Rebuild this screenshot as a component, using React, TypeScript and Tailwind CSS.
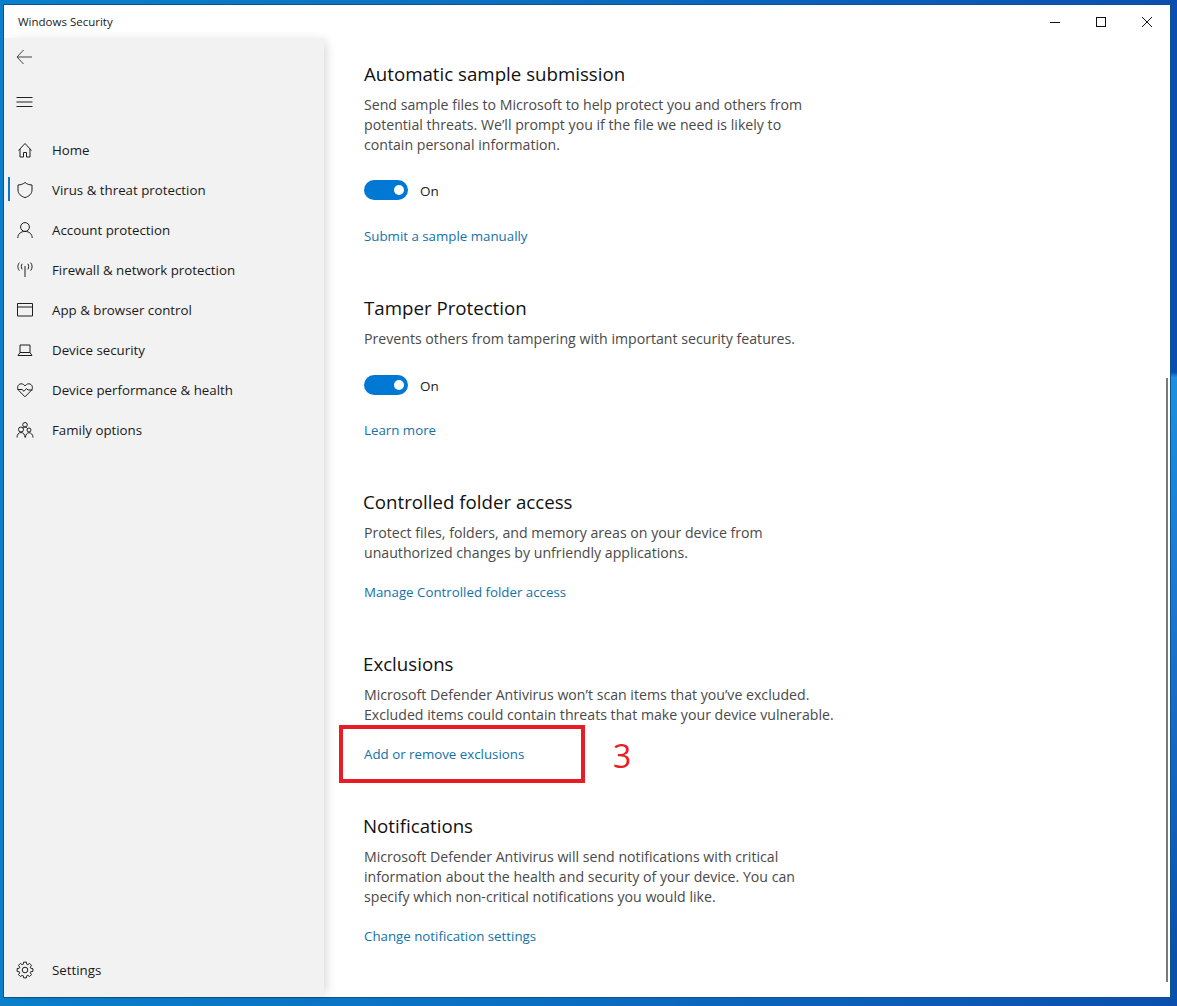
import type { ReactNode } from "react";

const font = { fontFamily: '"Open Sans", "Noto Sans", sans-serif' };

// 8 tooth gear outline for the settings row
function gearPath() {
  const points: string[] = [];
  for (let i = 0; i < 8; i++) {
    const a = (i * Math.PI) / 4;
    for (const [r, d] of [[6, -0.3], [8, -0.17], [8, 0.17], [6, 0.3]]) {
      points.push(`${(9 + r * Math.sin(a + d)).toFixed(2)} ${(9 - r * Math.cos(a + d)).toFixed(2)}`);
    }
  }
  return `M${points.join("L")}Z`;
}

function Icon({ children }: { children: ReactNode }) {
  return (
    <svg width="18" height="18" viewBox="0 0 18 18" fill="none" stroke="#1f1f1f" strokeWidth="1" className="shrink-0">
      {children}
    </svg>
  );
}

const navItems: { label: string; active?: boolean; icon: ReactNode }[] = [
  {
    label: "Home",
    icon: <path d="M2.500 9.500 9 2.500l6.500 7M4 8v8h3.500v-4.500h3V16H14V8" />,
  },
  {
    label: "Virus & threat protection",
    active: true,
    icon: <path d="M9 1.500c2 1.600 4.200 2.400 7 2.500v5c0 3.800-3 6.400-7 7.600C5 15.400 2 12.800 2 9V4c2.800-.1 5-.9 7-2.500Z" />,
  },
  {
    label: "Account protection",
    icon: (
      <>
        <circle cx="9" cy="6" r="4.400" />
        <path d="M1.800 17c0-4 3-6.600 7.200-6.600s7.200 2.600 7.200 6.600" />
      </>
    ),
  },
  {
    label: "Firewall & network protection",
    icon: (
      <>
        <path d="M9 5v11" />
        <path d="M6.200 2.800c-1.200 1.600-1.200 4 0 5.600M11.800 2.800c1.200 1.600 1.200 4 0 5.600M3.400 1.600c-2 2.500-2 5.600 0 8M14.600 1.600c2 2.500 2 5.600 0 8" />
      </>
    ),
  },
  {
    label: "App & browser control",
    icon: <path d="M1.500 2.500h15v12.500h-15zM1.500 6h15" />,
  },
  {
    label: "Device security",
    icon: <path d="M4 4h10v7.500H4zM2 14.500h14M2 14.500l2-3M16 14.500l-2-3" />,
  },
  {
    label: "Device performance & health",
    icon: <path d="M9 15.800 2.600 9.300C.5 7 1.800 2.800 5.200 2.800c1.600 0 2.800.8 3.800 2.200 1-1.400 2.200-2.200 3.800-2.200 3.400 0 4.700 4.200 2.600 6.500L9 15.800ZM1.500 8.500h4.500l2 1.800 2.500-2.800 1.500 1.500h4.500" />,
  },
  {
    label: "Family options",
    icon: (
      <>
        <circle cx="9" cy="3.800" r="2.300" />
        <circle cx="5" cy="8.500" r="2.500" />
        <circle cx="13" cy="9" r="2" />
        <path d="M1 16.500c0-3 1.700-5 4-5s4 2 4 5M9.500 16.500c0-3 1.500-4.800 3.500-4.800s4 1.800 4 4.800M7 7.500c.5-1 1-1.500 2-1.500s2 .6 2.500 1.500" />
      </>
    ),
  },
];

function NavRow({ label, active, icon }: { label: string; active?: boolean; icon: ReactNode }) {
  return (
    <div className="relative flex h-10 items-center pl-3">
      {active && <div className="absolute left-1 top-[7px] h-6 w-0.5 bg-[#0a78c8]" />}
      <Icon>{icon}</Icon>
      <span className="ml-[18px] pt-0.5 text-[13.3px] text-[#1a1a1a]">{label}</span>
    </div>
  );
}

function Heading({ children }: { children: ReactNode }) {
  return <h2 className="h-7 text-[18.7px] leading-7 text-[#111]">{children}</h2>;
}

function Desc({ children }: { children: ReactNode }) {
  return <p className="mt-[7px] text-[14.15px] leading-5 text-[#4a4a4a]">{children}</p>;
}

function Toggle({ className }: { className: string }) {
  return (
    <div className={`flex h-5 items-center ${className}`}>
      <div className="flex h-5 w-11 items-center justify-end rounded-full bg-[#0078d4] pr-[4px]">
        <div className="h-[10px] w-[10px] rounded-full bg-white" />
      </div>
      <span className="ml-3 pt-0.5 text-[13.5px] text-[#1a1a1a]">On</span>
    </div>
  );
}

function Link({ children, className }: { children: ReactNode; className: string }) {
  return <div className={`h-5 text-[13.3px] leading-5 text-[#1272a8] ${className}`}>{children}</div>;
}

export default function App() {
  return (
    <div
      className="h-[1006px] w-[1177px] overflow-hidden pl-1 pt-[5px] [background:linear-gradient(180deg,#0a4fb0_0%,#0a4fb0_37%,#1b90e0_37.5%,#1a78d0_60%,#0b50ad_95%)_right/7px_100%_no-repeat,linear-gradient(90deg,#0a80cc,#0a6cc0_50%,#0b4fae)]"
      style={font}
    >
      <div className="relative flex h-[992px] w-[1166px] flex-col bg-white shadow-[0_0_0_1px_#0d5488]">
        {/* Title bar */}
        <div className="flex h-[33px] shrink-0 items-center justify-between">
          <span className="ml-[14px] text-[11.5px] text-[#222]">Windows Security</span>
          <div className="flex items-center">
            <svg width="12" height="12" viewBox="0 0 12 12" stroke="#111" fill="none" className="mr-[34px]">
              <path d="M1 6.500h10" />
            </svg>
            <svg width="12" height="12" viewBox="0 0 12 12" stroke="#111" fill="none" className="mr-[34px]">
              <rect x="1.500" y="1.500" width="9" height="9" />
            </svg>
            <svg width="12" height="12" viewBox="0 0 12 12" stroke="#111" fill="none" className="mr-[17px]">
              <path d="M1 1l10 10M11 1 1 11" />
            </svg>
          </div>
        </div>

        <div className="flex min-h-0 flex-1">
          {/* Sidebar */}
          <aside className="flex w-80 shrink-0 flex-col bg-[#f2f2f2] shadow-[5px_0_10px_-3px_rgba(0,0,0,0.16)]">
            <div className="flex h-[38px] items-center pl-[11px]">
              <svg width="18" height="18" viewBox="0 0 18 18" stroke="#444" fill="none">
                <path d="M17 9H2M8.500 2 2 9l6.500 7" />
              </svg>
            </div>
            <div className="mt-[6px] flex h-10 items-center pl-[11px]">
              <svg width="18" height="18" viewBox="0 0 18 18" stroke="#222" fill="none">
                <path d="M1.500 4.500h16M1.500 9h16M1.500 13.500h16" />
              </svg>
            </div>
            <nav className="mt-[8px]">
              {navItems.map((item) => (
                <NavRow key={item.label} {...item} />
              ))}
            </nav>
            <div className="mt-auto pb-[7px]">
              <div className="flex h-10 items-center pl-3">
                <Icon>
                  <circle cx="9" cy="9" r="2.800" />
                  <path d={gearPath()} />
                </Icon>
                <span className="ml-[18px] pt-0.5 text-[13.3px] text-[#1a1a1a]">Settings</span>
              </div>
            </div>
          </aside>

          {/* Main content */}
          <main className="flex-1 pl-10 pt-[22px]">
            <Heading>Automatic sample submission</Heading>
            <Desc>
              Send sample files to Microsoft to help protect you and others from
              <br />
              potential threats. We’ll prompt you if the file we need is likely to
              <br />
              contain personal information.
            </Desc>
            <Toggle className="mt-[25px]" />
            <Link className="mt-[26px]">Submit a sample manually</Link>

            <div className="mt-12">
              <Heading>Tamper Protection</Heading>
              <Desc>Prevents others from tampering with important security features.</Desc>
              <Toggle className="mt-[26px]" />
              <Link className="mt-[25px]">Learn more</Link>
            </div>

            <div className="-ml-px mt-12">
              <Heading>Controlled folder access</Heading>
              <div className="ml-px">
                <Desc>
                  Protect files, folders, and memory areas on your device from
                  <br />
                  unauthorized changes by unfriendly applications.
                </Desc>
                <Link className="mt-[19px]">Manage Controlled folder access</Link>
              </div>
            </div>

            <div className="-ml-px mt-12">
              <Heading>Exclusions</Heading>
              <div className="ml-px">
                <Desc>
                  Microsoft Defender Antivirus won’t scan items that you’ve excluded.
                  <br />
                  Excluded items could contain threats that make your device vulnerable.
                </Desc>
                <Link className="mt-[19px]">Add or remove exclusions</Link>
              </div>
            </div>

            <div className="-ml-px mt-12">
              <Heading>Notifications</Heading>
              <div className="ml-px">
                <Desc>
                  Microsoft Defender Antivirus will send notifications with critical
                  <br />
                  information about the health and security of your device. You can
                  <br />
                  specify which non-critical notifications you would like.
                </Desc>
                <Link className="mt-[19px]">Change notification settings</Link>
              </div>
            </div>
          </main>
        </div>

        {/* Scrollbar */}
        <div className="absolute right-[2px] top-[373px] h-[604px] w-0.5 bg-[#7a7a7a]" />

        {/* Annotation */}
        <div className="absolute left-[335px] top-[720px] h-[58px] w-[246px] border-4 border-[#e81c24]" />
        <div className="absolute left-[609px] top-[731px] text-[32px] leading-10 text-[#e81c24]">3</div>
      </div>
    </div>
  );
}
